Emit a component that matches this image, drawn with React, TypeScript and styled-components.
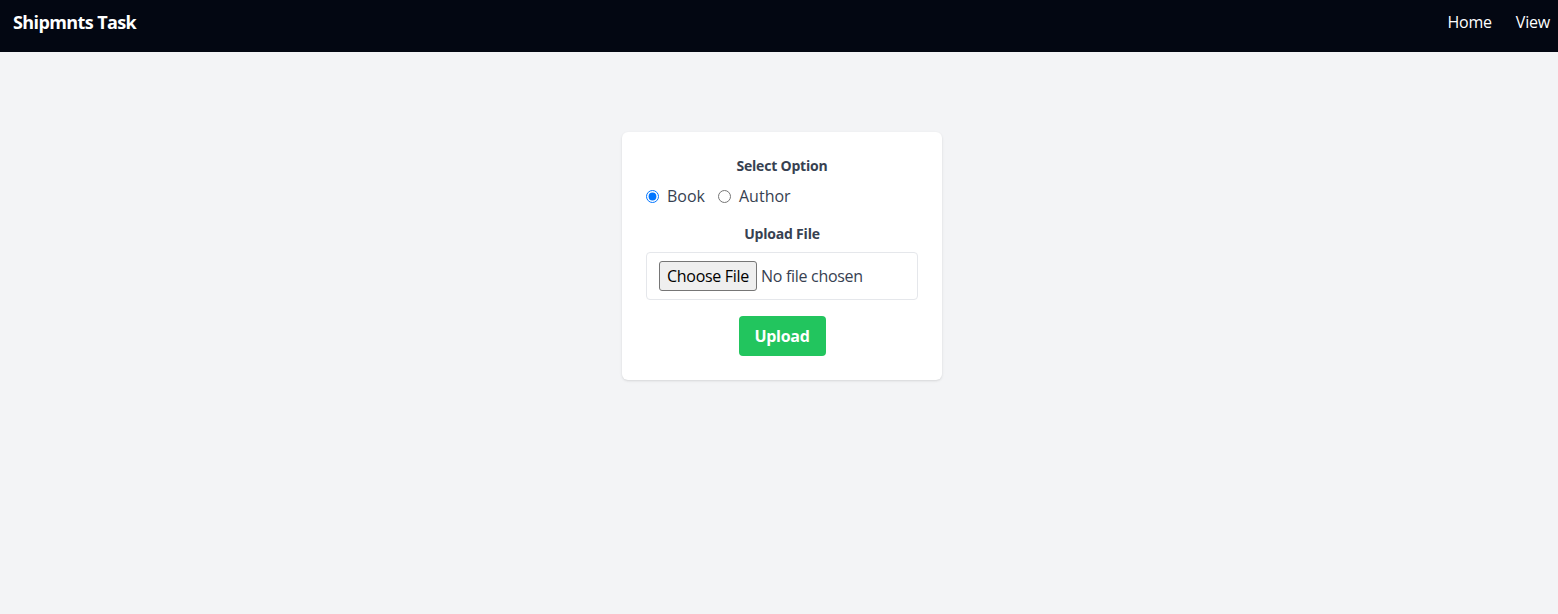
import React from "react";
import styled, { createGlobalStyle } from "styled-components";

const FONT = `"Open Sans", "Noto Sans", Arial, sans-serif`;

const Global = createGlobalStyle`
  * { box-sizing: border-box; }
  html, body { margin: 0; padding: 0; }
  body {
    background: #f3f4f6;
    font-family: ${FONT};
    color: #374151;
    min-height: 614px;
  }
`;

const NavBar = styled.nav`
  height: 52px;
  background: #030712;
  display: flex;
  align-items: center;
  justify-content: space-between;
  padding: 0 8px 8px 13px;
`;

const Brand = styled.div`
  color: #fff;
  font-size: 18px;
  font-weight: 700;
  line-height: 28px;
  letter-spacing: -0.6px;
`;

const NavLinks = styled.div`
  display: flex;
  gap: 24px;
`;

const NavLink = styled.a`
  color: #fff;
  font-size: 16px;
  line-height: 24px;
  text-decoration: none;
  letter-spacing: -0.2px;
`;

const Main = styled.main`
  display: flex;
  justify-content: center;
  padding-top: 80px;
  padding-left: 6px;
`;

const Card = styled.div`
  width: 320px;
  background: #fff;
  border-radius: 6px;
  box-shadow: 0 1px 3px 0 rgba(0, 0, 0, 0.1), 0 1px 2px -1px rgba(0, 0, 0, 0.1);
  padding: 24px;
  display: flex;
  flex-direction: column;
  align-items: stretch;
`;

const Label = styled.div<{ $mb: number }>`
  text-align: center;
  font-size: 14px;
  font-weight: 700;
  line-height: 20px;
  color: #374151;
  margin-bottom: ${(p) => p.$mb}px;
  letter-spacing: -0.2px;
`;

const RadioRow = styled.div`
  display: flex;
  align-items: center;
  gap: 13px;
  height: 24px;
  margin-bottom: 16px;
`;

const RadioOption = styled.label`
  display: flex;
  align-items: center;
  font-size: 16px;
  line-height: 24px;
  color: #374151;
  cursor: pointer;
`;

const Radio = styled.input`
  margin: 0 8px 0 0;
  width: 13px;
  height: 13px;
`;

const FileBox = styled.div`
  border: 1px solid #e5e7eb;
  border-radius: 4px;
  height: 48px;
  padding: 0 11px 0 12px;
  margin-bottom: 16px;
  display: flex;
  align-items: center;
`;

const FileInput = styled.input`
  font-size: 16px;
  font-family: ${FONT};
  color: #374151;
  width: 100%;
  letter-spacing: -0.3px;

  &::file-selector-button {
    height: 30px;
    width: 98px;
    padding: 0;
    margin-right: 4px;
    font-size: 16px;
    font-family: ${FONT};
    letter-spacing: -0.3px;
    color: #000;
    background: #efefef;
    border: 1px solid #767676;
    border-radius: 3px;
    cursor: pointer;
  }
`;

const ButtonRow = styled.div`
  display: flex;
  justify-content: center;
`;

const UploadButton = styled.button`
  background: #22c55e;
  color: #fff;
  border: none;
  border-radius: 4px;
  height: 40px;
  width: 87px;
  padding: 0;
  font-size: 16px;
  font-weight: 700;
  font-family: ${FONT};
  letter-spacing: -0.3px;
  cursor: pointer;
`;

export default function App() {
  const [option, setOption] = React.useState("book");
  return (
    <>
      <Global />
      <NavBar>
        <Brand>Shipmnts Task</Brand>
        <NavLinks>
          <NavLink href="#">Home</NavLink>
          <NavLink href="#">View</NavLink>
        </NavLinks>
      </NavBar>
      <Main>
        <Card>
          <Label $mb={8}>Select Option</Label>
          <RadioRow>
            <RadioOption>
              <Radio
                type="radio"
                name="opt"
                checked={option === "book"}
                onChange={() => setOption("book")}
              />
              Book
            </RadioOption>
            <RadioOption>
              <Radio
                type="radio"
                name="opt"
                checked={option === "author"}
                onChange={() => setOption("author")}
              />
              Author
            </RadioOption>
          </RadioRow>
          <Label $mb={8}>Upload File</Label>
          <FileBox>
            <FileInput type="file" />
          </FileBox>
          <ButtonRow>
            <UploadButton>Upload</UploadButton>
          </ButtonRow>
        </Card>
      </Main>
    </>
  );
}
